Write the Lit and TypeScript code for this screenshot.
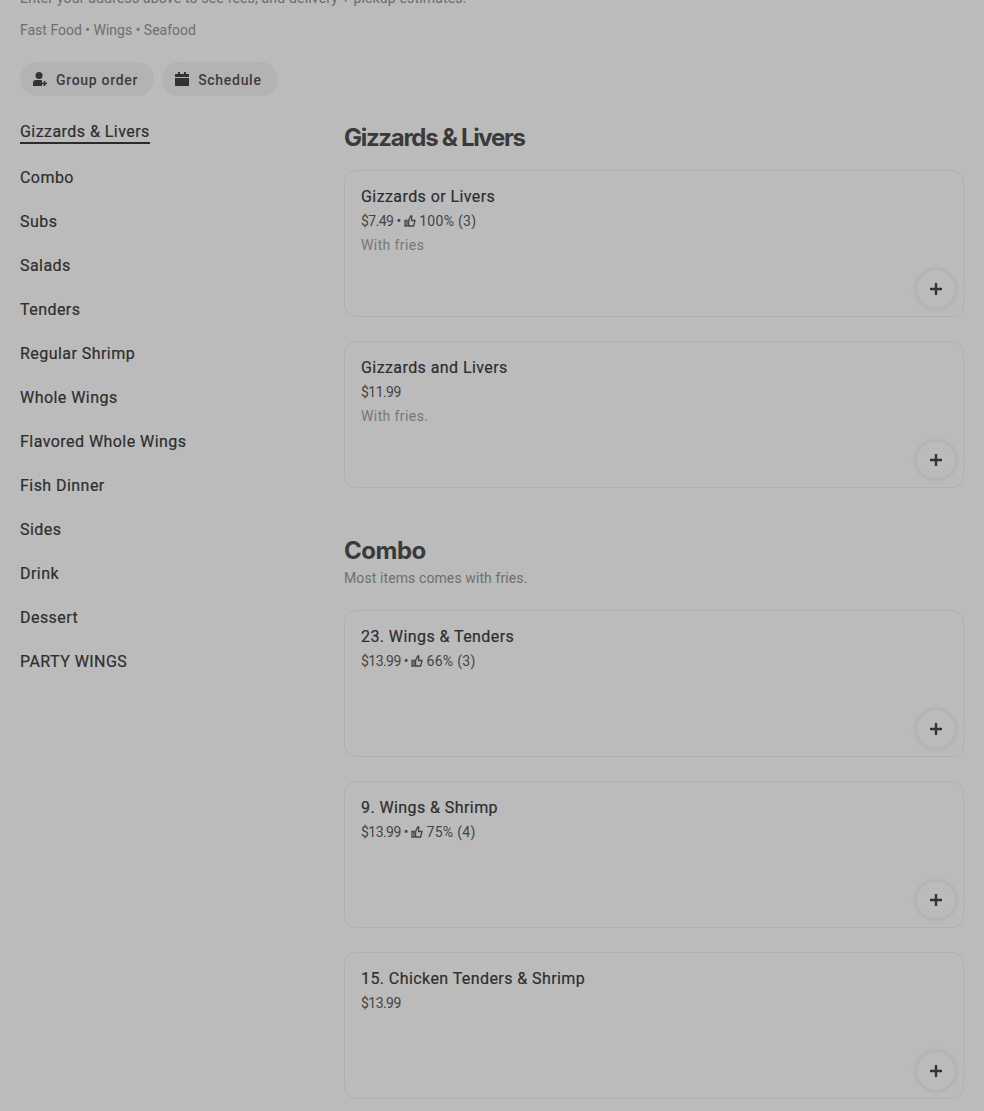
import { LitElement, html, css, svg } from "lit";
import { customElement } from "lit/decorators.js";

const nav = ["Gizzards & Livers","Combo","Subs","Salads","Tenders","Regular Shrimp","Whole Wings","Flavored Whole Wings","Fish Dinner","Sides","Drink","Dessert","PARTY WINGS"];
type Item = { name: string; price: string; rating?: string; desc?: string };
const sections: { title: string; cls: string; sub?: string; items: Item[] }[] = [
  { title: "Gizzards & Livers", cls: "tight", items: [
    { name: "Gizzards or Livers", price: "$7.49", rating: "100% (3)", desc: "With fries" },
    { name: "Gizzards and Livers", price: "$11.99", desc: "With fries." },
  ]},
  { title: "Combo", cls: "", sub: "Most items comes with fries.", items: [
    { name: "23. Wings & Tenders", price: "$13.99", rating: "66% (3)" },
    { name: "9. Wings & Shrimp", price: "$13.99", rating: "75% (4)" },
    { name: "15. Chicken Tenders & Shrimp", price: "$13.99" },
  ]},
];
const thumb = svg`<path fill="none" stroke="currentColor" stroke-width="1.300" d="M1 5.500h2v5.500H1zM4.600 11h5l1.400-5.500H7.500l.3-4.500h-1L4.600 5.500z"/>`;

@customElement("app-root")
export class AppRoot extends LitElement {
  static styles = css`
    :host { display: block; height: 1111px; overflow: hidden; background: #bbbbbb; font-family: "Roboto", "Liberation Sans", sans-serif; color: #333; }
    .page { padding: 0 20px; margin-top: -12px; }
    .notice { font-size: 14px; line-height: 20px; color: #6a6a6a; white-space: nowrap; letter-spacing: .17px; }
    .cuisine { font-size: 14px; line-height: 20px; color: #6e6e6e; margin-top: 12px; }
    .actions { display: flex; gap: 8px; margin-top: 22px; }
    .chip { display: flex; align-items: center; gap: 8px; height: 34px; padding: 2px 16px 0 12px; box-sizing: border-box; border-radius: 17px; background: #b3b3b3; font-size: 14px; font-weight: 500; color: #3c3c3c; letter-spacing: .7px; }
    .chip svg { width: 16px; height: 16px; margin-top: -2px; }
    .cols { display: grid; grid-template-columns: 324px 1fr; margin-top: 22px; }
    .nav { display: flex; flex-direction: column; align-items: flex-start; font-size: 16px; font-weight: 400; letter-spacing: .45px; color: #2e2e2e; -webkit-text-stroke: .2px #2e2e2e; }
    .nav a { height: 44px; line-height: 22px; padding-top: 3px; box-sizing: border-box; }
    .nav a.on { height: 46px; }
    .nav a.on span { display: block; border-bottom: 2px solid #2b2b2b; line-height: 21px; margin-right: -1px; }
    .sec { margin-bottom: 47px; }
    h2 { margin: 4px 0 0; font-family: "Inter", sans-serif; font-size: 24px; line-height: 32px; font-weight: 700; letter-spacing: -.5px; color: #3a3a3a; }
    h2.tight { letter-spacing: -1.300px; }
    .sub { font-size: 14px; line-height: 20px; color: #6e6e6e; margin-top: 1px; letter-spacing: .1px; }
    .cards { display: flex; flex-direction: column; gap: 24px; margin-top: 16px; }
    .sub + .cards { margin-top: 22px; }
    .card { position: relative; height: 147px; box-sizing: border-box; border: 1px solid #b0b0b0; border-radius: 12px; padding: 15px 16px; }
    .name { font-size: 16px; font-weight: 400; line-height: 22px; color: #2e2e2e; letter-spacing: .42px; -webkit-text-stroke: .2px #2e2e2e; }
    .meta { display: flex; align-items: center; gap: 3px; font-size: 14px; line-height: 20px; color: #444; margin-top: 3px; white-space: pre; }
    .price { letter-spacing: -.55px; }
    .rating { letter-spacing: .3px; }
    .meta svg { width: 12px; height: 12px; }
    .desc { font-size: 14px; line-height: 20px; color: #767676; margin-top: 4px; letter-spacing: .4px; }
    .add { position: absolute; right: 8px; bottom: 8px; width: 38px; height: 38px; border-radius: 50%; background: #bbb; box-shadow: 0 0 6px rgba(0,0,0,.12); display: flex; align-items: center; justify-content: center; }
    .add svg { width: 14px; height: 14px; }
  `;
  render() {
    return html`<div class="page">
      <div class="notice">Enter your address above to see fees, and delivery + pickup estimates.</div>
      <div class="cuisine">Fast Food • Wings • Seafood</div>
      <div class="actions">
        <div class="chip"><svg viewBox="0 0 16 16"><circle cx="7" cy="4.500" r="3.500" fill="#333"/><path fill="#333" d="M1 15v-3c0-1.700 1.300-3 3-3h5c.6 0 1 .2 1 .5V15z"/><path stroke="#333" stroke-width="1.600" d="M12.500 10v5M10 12.500h5"/></svg>Group order</div>
        <div class="chip"><svg viewBox="0 0 16 16"><path fill="#333" d="M1 3h3V1h2v2h4V1h2v2h3v3H1zM1 7h14v8H1z"/></svg>Schedule</div>
      </div>
      <div class="cols">
        <div class="nav">${nav.map((n, i) => html`<a class=${i === 0 ? "on" : ""}><span>${n}</span></a>`)}</div>
        <div>${sections.map(s => html`<div class="sec">
          <h2 class=${s.cls}>${s.title}</h2>
          ${s.sub ? html`<div class="sub">${s.sub}</div>` : ""}
          <div class="cards">${s.items.map(it => html`<div class="card">
            <div class="name">${it.name}</div>
            <div class="meta"><span class="price">${it.price}</span>${it.rating ? html`<span>•</span><svg viewBox="0 0 12 12">${thumb}</svg><span class="rating">${it.rating}</span>` : ""}</div>
            ${it.desc ? html`<div class="desc">${it.desc}</div>` : ""}
            <div class="add"><svg viewBox="0 0 14 14"><path stroke="#333" stroke-width="2.400" d="M7 1v12M1 7h12"/></svg></div>
          </div>`)}</div>
        </div>`)}</div>
      </div>
    </div>`;
  }
}
